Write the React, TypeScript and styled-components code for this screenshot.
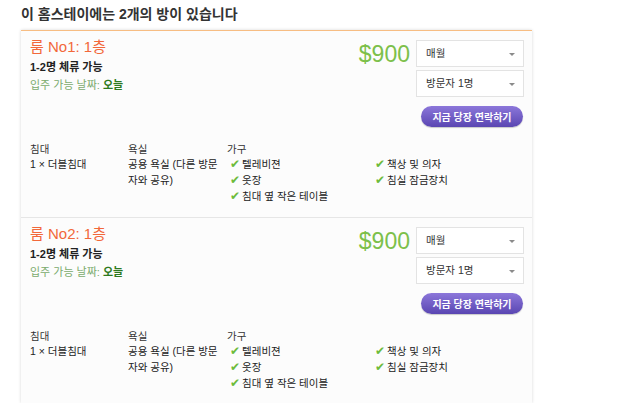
import React from 'react';
import styled, { createGlobalStyle } from 'styled-components';

const GlobalStyle = createGlobalStyle`
  body {
    margin: 0;
    background: #fff;
    font-family: "Liberation Sans", "Noto Sans CJK KR", sans-serif;
    color: #333;
  }
`;

type Room = {
  name: string;
  guests: string;
  price: string;
};

const rooms: Room[] = [
  { name: '룸 No1: 1층', guests: '1-2명 체류 가능', price: '$900' },
  { name: '룸 No2: 1층', guests: '1-2명 체류 가능', price: '$900' },
];

const furnitureA = ['텔레비젼', '옷장', '침대 옆 작은 테이블'];
const furnitureB = ['책상 및 의자', '침실 잠금장치'];

const RoomCard = ({ room, last }: { room: Room; last?: boolean }) => (
  <Card last={last}>
    <Top>
      <Info>
        <Title>{room.name}</Title>
        <Guests>{room.guests}</Guests>
        <Available>
          입주 가능 날짜: <strong>오늘</strong>
        </Available>
      </Info>
      <Booking>
        <Price>{room.price}</Price>
        <Controls>
          <Select>
            매월
            <Arrow />
          </Select>
          <Select>
            방문자 1명
            <Arrow />
          </Select>
          <ContactButton>지금 당장 연락하기</ContactButton>
        </Controls>
      </Booking>
    </Top>
    <Details>
      <Column>
        <Label>침대</Label>
        <Value>1 × 더블침대</Value>
      </Column>
      <Column>
        <Label>욕실</Label>
        <Value narrow>공용 욕실 (다른 방문 자와 공유)</Value>
      </Column>
      <Column>
        <Label>가구</Label>
        {furnitureA.map((f) => (
          <Item key={f}>
            <Check>✔</Check>
            {f}
          </Item>
        ))}
      </Column>
      <Column>
        <Label />
        {furnitureB.map((f) => (
          <Item key={f}>
            <Check>✔</Check>
            {f}
          </Item>
        ))}
      </Column>
    </Details>
  </Card>
);

export default function App() {
  return (
    <>
      <GlobalStyle />
      <Page>
        <Heading>이 홈스테이에는 2개의 방이 있습니다</Heading>
        <List>
          {rooms.map((r, i) => (
            <RoomCard key={r.name} room={r} last={i === rooms.length - 1} />
          ))}
        </List>
      </Page>
    </>
  );
}

const Page = styled.div`
  padding: 4px 0 0 21px;
`;

const Heading = styled.h2`
  margin: 0 0 5px;
  font-size: 14px;
  line-height: 21px;
  font-weight: bold;
  color: #333;
`;

const List = styled.div`
  width: 511px;
  background: #fcfcfc;
  border-top: 1px solid #f7bd83;
  box-shadow: 0 0 3px rgba(0, 0, 0, 0.16);
`;

const Card = styled.div<{ last?: boolean }>`
  padding: 6px 8px ${(p) => (p.last ? '12px' : '13px')} 9px;
  border-bottom: ${(p) => (p.last ? 'none' : '1px solid #e6e6e6')};
`;

const Top = styled.div`
  display: flex;
  justify-content: space-between;
  align-items: flex-start;
`;

const Info = styled.div`
  display: flex;
  flex-direction: column;
`;

const Title = styled.div`
  font-size: 15px;
  line-height: 20px;
  color: #f2683a;
  margin-bottom: 2px;
`;

const Guests = styled.div`
  font-size: 11px;
  line-height: 16px;
  font-weight: bold;
  color: #222;
`;

const Available = styled.div`
  margin-top: 2px;
  font-size: 11px;
  line-height: 16px;
  color: #7aab6c;

  strong {
    color: #2e7a20;
  }
`;

const Booking = styled.div`
  display: flex;
  align-items: flex-start;
  gap: 6px;
  margin-top: 3px;
`;

const Price = styled.div`
  font-size: 23px;
  line-height: 28px;
  color: #7cc04a;
`;

const Controls = styled.div`
  width: 108px;
  display: flex;
  flex-direction: column;
  align-items: flex-end;
`;

const Select = styled.div`
  position: relative;
  box-sizing: border-box;
  width: 108px;
  height: 27px;
  margin-bottom: 3px;
  padding-left: 9px;
  background: #fff;
  border: 1px solid #e3e3e3;
  font-size: 10.5px;
  line-height: 25px;
  color: #333;
`;

const Arrow = styled.span`
  position: absolute;
  right: 8px;
  top: 12px;
  width: 0;
  height: 0;
  border-left: 3px solid transparent;
  border-right: 3px solid transparent;
  border-top: 3px solid #8a8a8a;
`;

const ContactButton = styled.button`
  margin: 6px 1px 0 0;
  width: 102px;
  height: 21px;
  padding: 0;
  border: none;
  border-radius: 11px;
  background: linear-gradient(#8c77da, #5a46b2);
  box-shadow: 0 1px 1px rgba(0, 0, 0, 0.2);
  font-family: inherit;
  font-size: 10px;
  font-weight: bold;
  color: #fff;
`;

const Details = styled.div`
  display: grid;
  grid-template-columns: 98px 99px 145px 1fr;
  margin-top: 15px;
`;

const Column = styled.div`
  display: flex;
  flex-direction: column;
`;

const Label = styled.div`
  height: 14px;
  font-size: 10.5px;
  line-height: 14px;
  color: #333;
`;

const Value = styled.div<{ narrow?: boolean }>`
  width: ${(p) => (p.narrow ? '94px' : 'auto')};
  font-size: 10.5px;
  line-height: 16px;
  color: #222;
`;

const Item = styled.div`
  display: flex;
  align-items: center;
  gap: 2px;
  font-size: 10.5px;
  line-height: 16px;
  color: #222;
`;

const Check = styled.span`
  font-family: "DejaVu Sans", sans-serif;
  font-size: 12px;
  color: #6cbb3c;
  padding-left: 3px;
`;
